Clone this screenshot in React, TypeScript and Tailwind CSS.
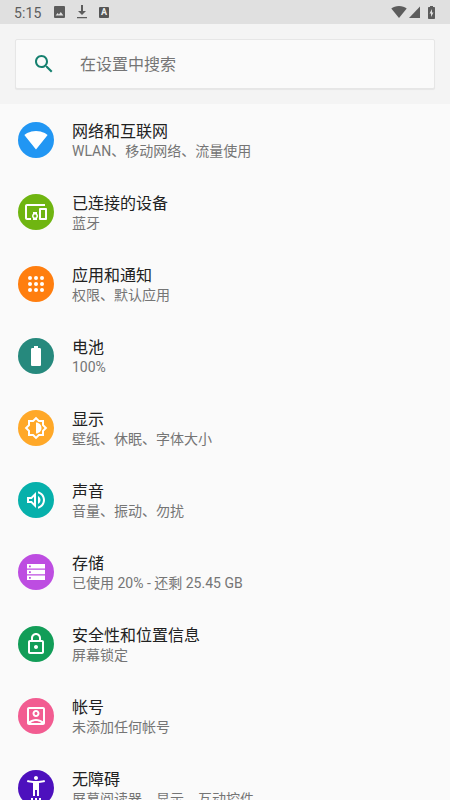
import React from 'react';

interface SettingItem {
  title: string;
  summary: string;
  color: string;
  icon: React.ReactNode;
}

const items: SettingItem[] = [
  {
    title: '网络和互联网',
    summary: 'WLAN、移动网络、流量使用',
    color: 'bg-[#2196f3]',
    icon: <path d="M12.01 21.49L23.64 7c-.45-.34-4.93-4-11.64-4C5.28 3 .81 6.66.36 7l11.63 14.49.01.01.01-.01z" />
  },
  {
    title: '已连接的设备',
    summary: '蓝牙',
    color: 'bg-[#6fb511]',
    icon: (
      <path d="M3 6h18V4H3c-1.1 0-2 .9-2 2v12c0 1.1.9 2 2 2h4v-2H3V6zm10 6H9v1.78c-.61.55-1 1.33-1 2.22s.39 1.67 1 2.22V20h4v-1.78c.61-.55 1-1.34 1-2.22s-.39-1.67-1-2.22V12zm-2 5.5c-.83 0-1.5-.67-1.5-1.5s.67-1.5 1.5-1.5 1.5.67 1.5 1.5-.67 1.5-1.5 1.5zM22 8h-6c-.5 0-1 .5-1 1v10c0 .5.5 1 1 1h6c.5 0 1-.5 1-1V9c0-.5-.5-1-1-1zm-1 10h-4v-8h4v8z" />
    )
  },
  {
    title: '应用和通知',
    summary: '权限、默认应用',
    color: 'bg-[#ff7e0f]',
    icon: (
      <>
        {[6, 12, 18].map((y) => [6, 12, 18].map((x) => <circle key={`${x}-${y}`} cx={x} cy={y} r="2" />))}
      </>
    )
  },
  {
    title: '电池',
    summary: '100%',
    color: 'bg-[#26897d]',
    icon: <path d="M15.67 4H14V2h-4v2H8.33C7.6 4 7 4.6 7 5.33v15.33C7 21.4 7.6 22 8.33 22h7.33c.74 0 1.34-.6 1.34-1.33V5.33C17 4.6 16.4 4 15.67 4z" />
  },
  {
    title: '显示',
    summary: '壁纸、休眠、字体大小',
    color: 'bg-[#ffa828]',
    icon: (
      <path d="M20 8.69V4h-4.69L12 .69 8.69 4H4v4.69L.69 12 4 15.31V20h4.69L12 23.31 15.31 20H20v-4.69L23.31 12 20 8.69zm-2 5.79V18h-3.52L12 20.48 9.52 18H6v-3.52L3.52 12 6 9.52V6h3.52L12 3.52 14.48 6H18v3.52L20.48 12 18 14.48zM12 6.5v11c3.04 0 5.5-2.46 5.5-5.5S15.04 6.5 12 6.5z" />
    )
  },
  {
    title: '声音',
    summary: '音量、振动、勿扰',
    color: 'bg-[#06b0ab]',
    icon: (
      <path d="M3 9v6h4l5 5V4L7 9H3zm7-.17v6.34L7.83 13H5v-2h2.83L10 8.83zM16.5 12c0-1.77-1.02-3.29-2.5-4.03v8.05c1.48-.73 2.5-2.25 2.5-4.02zM14 3.23v2.06c2.89.86 5 3.54 5 6.71s-2.11 5.85-5 6.71v2.06c4.01-.91 7-4.49 7-8.77s-2.99-7.86-7-8.77z" />
    )
  },
  {
    title: '存储',
    summary: '已使用 20% - 还剩 25.45 GB',
    color: 'bg-[#bd4de1]',
    icon: (
      <path
        fillRule="evenodd"
        d="M3 4h18v4.5H3zM3 9.8h18v4.5H3zM3 15.6h18v4.5H3zM5 5.4h1.8v1.8H5zM5 11.2h1.8V13H5zM5 17h1.8v1.8H5z"
      />
    )
  },
  {
    title: '安全性和位置信息',
    summary: '屏幕锁定',
    color: 'bg-[#129d58]',
    icon: (
      <path d="M18 8h-1V6c0-2.76-2.24-5-5-5S7 3.24 7 6v2H6c-1.1 0-2 .9-2 2v10c0 1.1.9 2 2 2h12c1.1 0 2-.9 2-2V10c0-1.1-.9-2-2-2zM9 6c0-1.66 1.34-3 3-3s3 1.34 3 3v2H9V6zm9 14H6V10h12v10zm-6-3c1.1 0 2-.9 2-2s-.9-2-2-2-2 .9-2 2 .9 2 2 2z" />
    )
  },
  {
    title: '帐号',
    summary: '未添加任何帐号',
    color: 'bg-[#f25c91]',
    icon: (
      <path d="M19 3H5c-1.1 0-2 .9-2 2v14c0 1.1.9 2 2 2h14c1.1 0 2-.9 2-2V5c0-1.1-.9-2-2-2zM7.35 18.5C8.66 17.56 10.26 17 12 17s3.34.56 4.65 1.5c.68.48.68.5-.15.5H7.5c-.83 0-.83-.02-.15-.5zM19 17.37C17.14 15.9 14.67 15 12 15s-5.14.9-7 2.37V5h14v12.37zM12 13c1.93 0 3.5-1.57 3.5-3.5S13.93 6 12 6 8.5 7.57 8.5 9.5 10.07 13 12 13zm0-5c.83 0 1.5.67 1.5 1.5S12.83 11 12 11s-1.5-.67-1.5-1.5S11.17 8 12 8z" />
    )
  },
  {
    title: '无障碍',
    summary: '屏幕阅读器、显示、互动控件',
    color: 'bg-[#4d10bd]',
    icon: (
      <path d="M20.5 4c-2.61.7-5.67 1-8.5 1s-5.89-.3-8.5-1L3 6c1.86.5 4 .83 6 1v13h2v-6h2v6h2V7c2-.17 4.14-.5 6-1l-.5-2zM12 4c1.1 0 2-.9 2-2s-.9-2-2-2-2 .9-2 2 .9 2 2 2zM7 24h2v-2H7v2zm4 0h2v-2h-2v2zm4 0h2v-2h-2v2z" />
    )
  }
];

const StatusBar = () => (
  <div className="flex h-6 shrink-0 items-center justify-between bg-[#e0e0e0] pl-[14px] pr-[15px] text-[#5c5c5c]">
    <div className="flex items-center">
      <span className="w-[40px] pt-px text-[14px] leading-6 tracking-[0.1px]">5:15</span>
      <svg className="h-3 w-[11px]" viewBox="0 0 11 12" fill="currentColor">
        <path fillRule="evenodd" d="M1 0h9a1 1 0 0 1 1 1v10a1 1 0 0 1-1 1H1a1 1 0 0 1-1-1V1a1 1 0 0 1 1-1zM1.6 9.6h7.8L6.8 6 4.9 8.4 3.7 7z" />
      </svg>
      <svg className="ml-3 h-[14px] w-[10px]" viewBox="0 0 10 14" fill="currentColor">
        <path d="M4 0h2v6h3L5 10 1 6h3zM0 12h10v1.3H0z" />
      </svg>
      <span className="ml-3 flex h-[11px] w-[10px] items-center justify-center rounded-[1px] bg-[#555] text-[9px] leading-none font-bold text-[#eee]">
        A
      </span>
    </div>
    <div className="flex items-center">
      <svg className="h-3 w-4" viewBox="0 0 16 12" fill="currentColor">
        <path d="M8 12L.3 2.6C2.2 1 4.9 0 8 0s5.8 1 7.7 2.6z" />
      </svg>
      <svg className="ml-[2px] h-3 w-[11px]" viewBox="0 0 11 12" fill="currentColor">
        <path d="M11 .5V12H0z" />
      </svg>
      <svg className="ml-2 h-[13px] w-[7px]" viewBox="0 0 7 13" fill="currentColor">
        <path fillRule="evenodd" d="M2 0h3v1h1.2q.8 0 .8.8v10.4q0 .8-.8.8H.8q-.8 0-.8-.8V1.8Q0 1 .8 1H2zM4 3L1.5 7.5H3V11l2.500-4.500H4z" />
      </svg>
    </div>
  </div>
);

const SearchBar = () => (
  <div className="h-20 shrink-0 bg-[#f4f4f4] px-[15px] pt-[15px]">
    <div className="flex h-[50px] items-center rounded-[2px] border border-[#e6e6e6] bg-[#fafafa] pl-4 shadow-[0_1px_1px_rgba(0,0,0,0.06)]">
      <svg className="h-6 w-6" viewBox="0 0 24 24" fill="#15806f">
        <path d="M15.5 14h-.79l-.28-.27C15.41 12.59 16 11.11 16 9.5 16 5.91 13.09 3 9.5 3S3 5.91 3 9.5 5.91 16 9.5 16c1.61 0 3.09-.59 4.23-1.57l.27.28v.79l5 4.99L20.49 19l-4.99-5zm-6 0C7.01 14 5 11.99 5 9.5S7.01 5 9.5 5 14 7.01 14 9.5 11.99 14 9.5 14z" />
      </svg>
      <span className="ml-6 pt-0.5 text-base text-[#757575]">在设置中搜索</span>
    </div>
  </div>
);

const SettingRow: React.FC<{ item: SettingItem }> = ({ item }) => (
  <div className="flex h-[72px] shrink-0 items-center pl-[18px]">
    <div className={`flex h-9 w-9 items-center justify-center rounded-full ${item.color}`}>
      <svg className="h-6 w-6" viewBox="0 0 24 24" fill="#fff">
        {item.icon}
      </svg>
    </div>
    <div className="ml-[18px] pt-[2px] whitespace-nowrap">
      <div className="text-base leading-5 text-[#212121]">{item.title}</div>
      <div className="text-sm leading-[19px] text-[#757575]">{item.summary}</div>
    </div>
  </div>
);

const App = () => {
  return (
    <div
      lang="zh-CN"
      className="flex h-[800px] w-[450px] flex-col overflow-hidden bg-[#fafafa] font-[Roboto,'Noto_Sans_CJK_SC',sans-serif]"
    >
      <StatusBar />
      <SearchBar />
      {items.map((item) => (
        <SettingRow key={item.title} item={item} />
      ))}
    </div>
  );
};

export default App;
